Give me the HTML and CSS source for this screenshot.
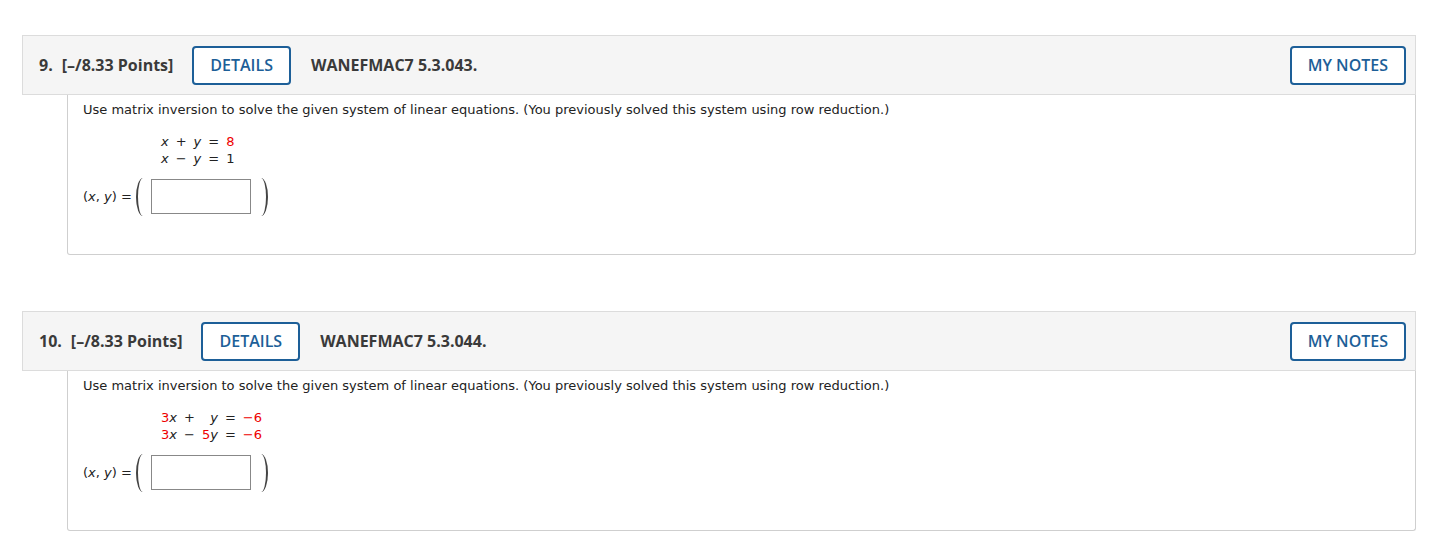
FILE: index.html
```html
<!DOCTYPE html>
<html>
<head>
<meta charset="utf-8">
<link rel="stylesheet" href="styles.css">
</head>
<body>
<div class="page">
  <div class="question">
    <div class="qhead">
      <span class="qnum">9.</span>
      <span class="qpts">[–/8.33 Points]</span>
      <button class="btn">DETAILS</button>
      <span class="qtitle">WANEFMAC7 5.3.043.</span>
      <button class="btn">MY NOTES</button>
    </div>
    <div class="qbody">
      <p class="prompt">Use matrix inversion to solve the given system of linear equations. (You previously solved this system using row reduction.)</p>
      <div class="eqs">
        <span class="t"><i>x</i></span><span class="t">+</span><span class="t"><i>y</i></span><span class="t">=</span><span class="t red">8</span>
        <span class="t"><i>x</i></span><span class="t">−</span><span class="t"><i>y</i></span><span class="t">=</span><span class="t">1</span>
      </div>
      <div class="answer">
        <span class="lbl">(<i>x</i>, <i>y</i>) =</span>
        <span class="paren"></span>
        <span class="box"></span>
        <span class="paren right"></span>
      </div>
    </div>
  </div>
  <div class="question">
    <div class="qhead">
      <span class="qnum">10.</span>
      <span class="qpts">[–/8.33 Points]</span>
      <button class="btn">DETAILS</button>
      <span class="qtitle">WANEFMAC7 5.3.044.</span>
      <button class="btn">MY NOTES</button>
    </div>
    <div class="qbody">
      <p class="prompt">Use matrix inversion to solve the given system of linear equations. (You previously solved this system using row reduction.)</p>
      <div class="eqs">
        <span class="t"><span class="red">3</span><i>x</i></span><span class="t">+</span><span class="t"><i>y</i></span><span class="t">=</span><span class="t red">−6</span>
        <span class="t"><span class="red">3</span><i>x</i></span><span class="t">−</span><span class="t"><span class="red">5</span><i>y</i></span><span class="t">=</span><span class="t red">−6</span>
      </div>
      <div class="answer">
        <span class="lbl">(<i>x</i>, <i>y</i>) =</span>
        <span class="paren"></span>
        <span class="box"></span>
        <span class="paren right"></span>
      </div>
    </div>
  </div>
</div>
</body>
</html>
```
FILE: styles.css
```css
html, body {
  margin: 0;
  padding: 0;
  background: #fff;
}
.page {
  padding: 35px 14px 0 22px;
}
.question + .question {
  margin-top: 56px;
}
.qhead {
  display: flex;
  align-items: center;
  height: 58px;
  background: #f5f5f5;
  border: 1px solid #dcdcdc;
  padding: 0 9px 0 16px;
  font-family: "Open Sans", "Noto Sans", sans-serif;
  font-weight: 700;
  font-size: 16px;
  color: #3a3a3a;
}
.qnum {
  margin-right: 9px;
}
.qpts {
  margin-right: 19px;
}
.btn {
  height: 39px;
  padding: 0 16px;
  border: 2px solid #1d5f98;
  border-radius: 4px;
  background: #fff;
  color: #1d5f98;
  font-family: "Open Sans", "Noto Sans", sans-serif;
  font-weight: 600;
  font-size: 16px;
  margin: 0;
  box-sizing: border-box;
}
.qtitle {
  margin-left: 20px;
  flex: 1;
}
.qbody {
  margin-left: 45px;
  height: 152px;
  border: 1px solid #cfcfcf;
  border-top: none;
  border-radius: 0 0 3px 3px;
  padding: 7px 15px 0;
  font-family: "DejaVu Sans", Verdana, sans-serif;
  font-size: 13px;
  color: #222;
}
.prompt {
  margin: 0;
  line-height: 16px;
}
.eqs {
  display: inline-grid;
  grid-template-columns: repeat(5, auto);
  column-gap: 7px;
  margin: 15px 0 0 78px;
  line-height: 17px;
}
.t {
  justify-self: end;
}
.red {
  color: #e00;
}
.answer {
  display: flex;
  align-items: center;
  margin-top: 9px;
  height: 40px;
}
.lbl {
  margin-right: 4px;
}
.paren {
  width: 7px;
  height: 38px;
  box-sizing: border-box;
  border-left: 2px solid #444;
  border-radius: 100% 0 0 100% / 50% 0 0 50%;
  margin-top: 2px;
}
.paren.right {
  border-left: none;
  border-right: 2px solid #444;
  border-radius: 0 100% 100% 0 / 0 50% 50% 0;
  margin-left: 10px;
}
.box {
  width: 100px;
  height: 35px;
  box-sizing: border-box;
  border: 1px solid #888;
  margin-left: 8px;
}
```
